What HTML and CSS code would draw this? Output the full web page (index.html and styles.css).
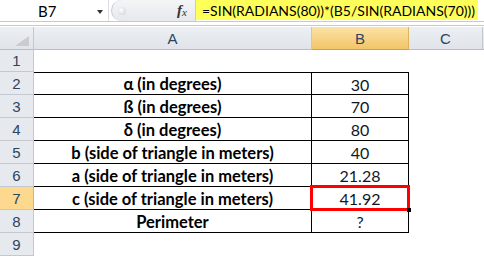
FILE: index.html
```html
<!DOCTYPE html>
<html>
<head>
<meta charset="utf-8">
<link rel="stylesheet" href="styles.css">
</head>
<body>
<div class="app">
  <div class="fbar">
    <div class="namebox"><span class="ref">B7</span><span class="caret"></span></div>
    <div class="handle">
      <span class="groove"></span>
      <span class="fx"><i>f</i><sub>x</sub></span>
    </div>
    <div class="formula"><span class="hl">=SIN(RADIANS(80))*(B5/SIN(RADIANS(70)))</span></div>
  </div>
  <div class="band"></div>
  <div class="sheet">
    <div class="corner"><span class="tri"></span></div>
    <div class="ch">A</div>
    <div class="ch sel">B</div>
    <div class="ch">C</div>
    <div class="ch end"></div>

    <div class="rh">1</div><div class="c"></div><div class="c"></div><div class="c"></div><div class="c"></div>

    <div class="rh">2</div><div class="c t a first">α (in degrees)</div><div class="c t b first">30</div><div class="c"></div><div class="c"></div>
    <div class="rh">3</div><div class="c t a">ß (in degrees)</div><div class="c t b">70</div><div class="c"></div><div class="c"></div>
    <div class="rh">4</div><div class="c t a">δ (in degrees)</div><div class="c t b">80</div><div class="c"></div><div class="c"></div>
    <div class="rh">5</div><div class="c t a">b (side of triangle in meters)</div><div class="c t b">40</div><div class="c"></div><div class="c"></div>
    <div class="rh">6</div><div class="c t a">a (side of triangle in meters)</div><div class="c t b">21.28</div><div class="c"></div><div class="c"></div>
    <div class="rh selr">7</div><div class="c t a">c (side of triangle in meters)</div><div class="c t b active">41.92<span class="selbox"></span><span class="fill"></span></div><div class="c"></div><div class="c"></div>
    <div class="rh">8</div><div class="c t a">Perimeter</div><div class="c t b">?</div><div class="c"></div><div class="c"></div>
    <div class="rh">9</div><div class="c"></div><div class="c"></div><div class="c"></div><div class="c"></div>
  </div>
</div>
</body>
</html>
```

FILE: styles.css
```css
html, body {
  margin: 0;
  padding: 0;
  background: #ffffff;
}
.app {
  width: 484px;
  height: 258px;
  overflow: hidden;
  font-family: "Lato", "Liberation Sans", sans-serif;
}
.fbar {
  display: flex;
  height: 21px;
  border-bottom: 1px solid #c6cad0;
  background: #ffffff;
}
.namebox {
  width: 108px;
  display: flex;
  align-items: center;
  position: relative;
  border-right: 1px solid #dadde2;
}
.ref {
  margin-left: 38px;
  font-size: 15px;
  color: #000;
}
.caret {
  position: absolute;
  left: 97px;
  top: 10px;
  width: 0;
  height: 0;
  border-left: 3px solid transparent;
  border-right: 3px solid transparent;
  border-top: 4px solid #333;
}
.handle {
  width: 83px;
  display: flex;
  align-items: center;
  justify-content: space-between;
  border-right: 1px solid #c8ccd2;
  background: linear-gradient(#f4f5f7, #e6e8ec);
  border-left: 1px solid #c6cad0;
  border-radius: 11px 0 0 11px;
  margin-left: 2px;
}
.groove {
  width: 8px;
  height: 8px;
  margin-left: 6px;
  border-radius: 50%;
  background: radial-gradient(circle at 40% 40%, #ffffff, #c9ccd1);
}
.fx {
  margin-right: 8px;
  font-family: "Liberation Serif", serif;
  font-size: 15px;
  color: #333;
  line-height: 1;
}
.fx i {
  font-style: italic;
  font-weight: bold;
}
.fx sub {
  font-style: italic;
  font-size: 11px;
  vertical-align: -1px;
}
.formula {
  flex: 1;
  display: flex;
  align-items: stretch;
  min-width: 0;
}
.hl {
  background: #ffff59;
  font-size: 14px;
  padding: 0 3px 0 6px;
  display: flex;
  align-items: center;
  height: 20px;
  color: #000;
  white-space: nowrap;
}
.band {
  height: 3px;
  border-bottom: 1px solid #c6cad0;
  background: #ffffff;
}
.sheet {
  display: grid;
  grid-template-columns: 34px 278px 97px 74px 1px;
  grid-template-rows: 23px 22px repeat(8, 23px);
  position: relative;
  top: 1px;
}
.corner, .ch, .rh {
  box-sizing: border-box;
  background: linear-gradient(#eceff3, #e0e4ea);
  color: #2c4462;
  font-family: "Liberation Sans", sans-serif;
  font-size: 15px;
  display: flex;
  align-items: center;
  justify-content: center;
}
.corner {
  border-right: 1px solid #c5c9cf;
  border-bottom: 1px solid #b8bec6;
  position: relative;
}
.tri {
  position: absolute;
  right: 4px;
  bottom: 3px;
  width: 0;
  height: 0;
  border-left: 14px solid transparent;
  border-bottom: 10px solid #c9cbcf;
}
.ch {
  border-right: 1px solid #c5c9cf;
  border-bottom: 1px solid #b8bec6;
}
.ch.sel {
  background: linear-gradient(#fbe3a6, #f2c567);
  border-bottom: 1px solid #d89f3a;
  border-right: 1px solid #e0b25a;
}
.ch.end {
  border-right: 0;
}
.rh {
  border-right: 1px solid #c5c9cf;
  border-bottom: 1px solid #c5c9cf;
  background: #e6e9ee;
}
.rh.selr {
  background: #fcd98e;
  border-right: 1px solid #e0b25a;
}
.c {
  box-sizing: border-box;
  font-size: 16px;
  display: flex;
  align-items: center;
  justify-content: center;
  color: #000;
  padding-top: 1px;
}
.c.t {
  border-bottom: 1px solid #000;
  border-right: 1px solid #000;
}
.c.first {
  border-top: 1px solid #000;
}
.c.a {
  font-weight: bold;
  font-size: 16.5px;
}
.c.b {
  color: #101828;
}
.active {
  position: relative;
}
.selbox {
  position: absolute;
  left: -2px;
  top: -2px;
  right: -2px;
  bottom: -2px;
  border: 3px solid #ff0000;
}
.fill {
  position: absolute;
  right: -3px;
  bottom: -3px;
  width: 4px;
  height: 4px;
  background: #000;
}
```
